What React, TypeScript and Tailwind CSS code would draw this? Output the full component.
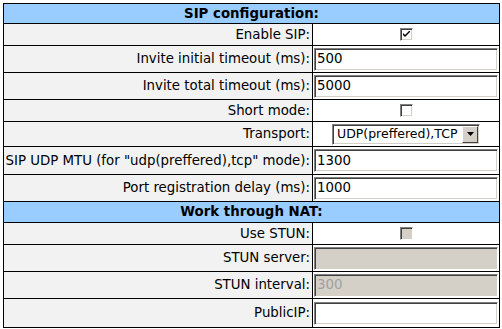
const font = { fontFamily: '"DejaVu Sans", Verdana, sans-serif' };

const inset =
  "border border-t-[#808080] border-l-[#808080] border-b-white border-r-white shadow-[inset_1px_1px_0_#404040,inset_-1px_-1px_0_#d4d0c8]";

const Check = ({ checked, disabled }: { checked?: boolean; disabled?: boolean }) => (
  <span
    className={`flex items-center justify-center w-[13px] h-[13px] ${inset} ${
      disabled ? "bg-[#d4d0c8]" : "bg-white"
    }`}
  >
    {checked && (
      <svg width="7" height="7" viewBox="0 0 7 7">
        <path d="M0 2 L0 4 L2 6 L7 1 L7 -1 L2 4 Z" fill="#000" />
      </svg>
    )}
  </span>
);

const Field = ({ value, disabled }: { value?: string; disabled?: boolean }) => (
  <div
    className={`h-[23px] w-full flex items-center pl-[2px] text-[13.33px] ${inset} ${
      disabled ? "bg-[#d4d0c8] text-[#a0a0a0]" : "bg-white text-black"
    }`}
  >
    {value}
  </div>
);

const Select = () => (
  <div className={`h-[21px] w-[148px] flex items-center bg-white ${inset}`}>
    <span className="flex-1 pl-[4px] text-[12.5px] whitespace-nowrap">UDP(preffered),TCP</span>
    <span className="w-[16px] h-[17px] mr-[1px] bg-[#d4d0c8] flex items-center justify-center border border-t-white border-l-white border-b-[#404040] border-r-[#404040]">
      <svg width="7" height="4" viewBox="0 0 7 4">
        <path d="M0 0 H7 L3.5 4 Z" fill="#000" />
      </svg>
    </span>
  </div>
);

type Row = {
  label: string;
  h: string;
  control: React.ReactNode;
  center?: boolean;
};

const sip: Row[] = [
  { label: "Enable SIP:", h: "h-[22px]", control: <Check checked />, center: true },
  { label: "Invite initial timeout (ms):", h: "h-[27px]", control: <Field value="500" /> },
  { label: "Invite total timeout (ms):", h: "h-[27px]", control: <Field value="5000" /> },
  { label: "Short mode:", h: "h-[22px]", control: <Check />, center: true },
  { label: "Transport:", h: "h-[25px]", control: <Select />, center: true },
  { label: 'SIP UDP MTU (for "udp(preffered),tcp" mode):', h: "h-[28px]", control: <Field value="1300" /> },
  { label: "Port registration delay (ms):", h: "h-[27px]", control: <Field value="1000" /> },
];

const nat: Row[] = [
  { label: "Use STUN:", h: "h-[22px]", control: <Check disabled />, center: true },
  { label: "STUN server:", h: "h-[27px]", control: <Field disabled /> },
  { label: "STUN interval:", h: "h-[27px]", control: <Field value="300" disabled /> },
  { label: "PublicIP:", h: "h-[28px]", control: <Field />, last: true } as Row,
];

const Header = ({ title, h }: { title: string; h: string }) => (
  <div className={`${h} border-b border-black bg-[#99ccff] flex items-center justify-center font-bold text-[13.33px]`}>
    {title}
  </div>
);

const Rows = ({ rows }: { rows: Row[] }) => (
  <>
    {rows.map((r, i) => (
      <div
        key={r.label}
        className={`${r.h} flex ${
          rows === nat && i === rows.length - 1 ? "" : "border-b border-black"
        }`}
      >
        <div className="w-[309px] shrink-0 bg-[#f2f2f2] border-r border-black flex items-center justify-end pr-[2px] text-[13.33px] whitespace-nowrap">
          {r.label}
        </div>
        <div className={`flex-1 bg-white flex items-center px-[1px] ${r.center ? "justify-center" : ""}`}>
          {r.control}
        </div>
      </div>
    ))}
  </>
);

export default function App() {
  return (
    <div className="w-[502px] h-[329px] bg-white pt-[3px] pl-[3px] leading-[16px] text-black" style={font}>
      <div className="w-[497px] border border-black flex flex-col">
        <Header title="SIP configuration:" h="h-[20px]" />
        <Rows rows={sip} />
        <Header title="Work through NAT:" h="h-[21px]" />
        <Rows rows={nat} />
      </div>
    </div>
  );
}
